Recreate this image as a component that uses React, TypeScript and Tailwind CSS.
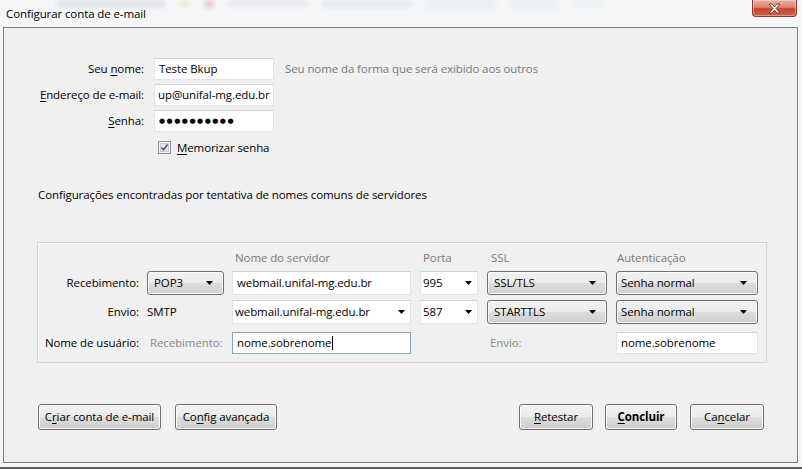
import React from 'react';

// Windows 7 style "Configurar conta de e-mail" dialog
const BTN_BG = 'bg-[linear-gradient(#f2f2f2,#ebebeb_50%,#dddddd_50%,#cfcfcf)]';

function U({ children }: { children: React.ReactNode }) {
  return <span className="underline underline-offset-[2px] decoration-[1px]">{children}</span>;
}

function Arrow() {
  return (
    <svg width="7" height="4" viewBox="0 0 7 4" className="shrink-0">
      <path d="M0 0h7L3.5 4z" fill="#000" />
    </svg>
  );
}

function SelectBtn({ value, className = '' }: { value: string; className?: string }) {
  return (
    <div
      className={`flex h-[24px] items-center justify-between rounded-[3px] border border-[#707070] ${BTN_BG} pl-[6px] pr-[10px] shadow-[inset_0_0_0_1px_#fbfbfb] ${className}`}
    >
      <span>{value}</span>
      <Arrow />
    </div>
  );
}

function Combo({ value, className = '' }: { value: string; className?: string }) {
  return (
    <div
      className={`flex h-[24px] items-center justify-between border border-[#e2e3ea] border-t-[#d0d3d9] bg-white pl-[2px] pr-[5px] ${className}`}
    >
      <span>{value}</span>
      <Arrow />
    </div>
  );
}

function TextBox({ children, className = '' }: { children: React.ReactNode; className?: string }) {
  return (
    <div
      className={`flex h-[22px] items-center border border-[#e2e3ea] border-t-[#d0d3d9] bg-white pl-[4px] ${className}`}
    >
      {children}
    </div>
  );
}

function Button({ children, className = '' }: { children: React.ReactNode; className?: string }) {
  return (
    <div
      className={`flex h-[26px] items-center justify-center rounded-[3px] border border-[#707070] ${BTN_BG} shadow-[inset_0_0_0_1px_#fbfbfb] ${className}`}
    >
      {children}
    </div>
  );
}

export default function App() {
  return (
    <div className="relative h-[469px] w-[802px] overflow-hidden bg-[#f4f6f8] font-['Open_Sans',sans-serif] text-[11.5px] tracking-[-0.1px] text-black">
      {/* title bar */}
      <div className="relative h-[27px]">
        <div className="absolute left-0 top-0 flex h-[10px] w-full items-start gap-[14px] pl-[56px] opacity-40 blur-[2px]">
          <div className="h-[8px] w-[110px] rounded bg-[#c9cdd3]" />
          <div className="h-[7px] w-[10px] rounded-full bg-[#e8e07a]" />
          <div className="h-[8px] w-[10px] rounded bg-[#d98a86]" />
          <div className="h-[7px] w-[80px] rounded bg-[#cfd3d8]" />
          <div className="h-[8px] w-[90px] rounded bg-[#d4d8de]" />
          <div className="h-[10px] w-[70px] rounded bg-[#dfe6f0]" />
          <div className="h-[9px] w-[50px] rounded bg-[#e3e6ea]" />
          <div className="h-[8px] w-[30px] rounded bg-[#e6e8eb]" />
        </div>
        <div className="relative pl-[6px] pt-[6px] leading-[16px]">Configurar conta de e-mail</div>
        <div className="absolute right-[5px] top-0 flex h-[17px] w-[45px] items-center justify-center rounded-b-[4px] border border-t-0 border-[#8a3a2c] bg-[linear-gradient(#eab1a3,#dc8470_45%,#c9442c_55%,#d4634a)] shadow-[inset_0_0_0_1px_rgba(255,255,255,0.35)]">
          <svg width="13" height="11" viewBox="0 0 13 11">
            <path
              d="M1 1h3l2.5 3 2.5-3h3L8 5.5 12 10H9L6.5 7 4 10H1l4-4.5z"
              fill="#fff"
              stroke="#4a2a26"
              strokeWidth="0.8"
              strokeLinejoin="round"
            />
          </svg>
        </div>
      </div>

      {/* dialog panel */}
      <div className="ml-[3px] flex h-[436px] w-[795px] flex-col border border-[#7d7d7d] bg-[#f0f0f0]">
        <div className="grid grid-cols-[140px_120px_1fr] gap-x-[10px] gap-y-[4px] pt-[30px] leading-[22px]">
          <div className="text-right">
            Seu <U>n</U>ome:
          </div>
          <TextBox>Teste Bkup</TextBox>
          <div className="pl-[1px] text-[#7a7a7a]">Seu nome da forma que será exibido aos outros</div>

          <div className="text-right">
            <U>E</U>ndereço de e-mail:
          </div>
          <TextBox className="overflow-hidden whitespace-nowrap !pl-[3px]">up@unifal-mg.edu.br</TextBox>
          <div />

          <div className="text-right">
            <U>S</U>enha:
          </div>
          <TextBox>
            <span className="font-['DejaVu_Sans',sans-serif] text-[7px] tracking-[1.5px]">●●●●●●●●●●</span>
          </TextBox>
          <div />
        </div>

        <div className="ml-[154px] mt-[9px] flex h-[13px] items-center gap-[6px] leading-[16px]">
          <svg width="13" height="13" viewBox="0 0 13 13">
            <rect x="0.5" y="0.5" width="12" height="12" fill="#f4f4f4" stroke="#8e8f8f" />
            <rect x="2.5" y="2.5" width="8" height="8" fill="#e3e5ea" stroke="#c6cad1" />
            <path d="M3.5 6.5l2 2.2L9.6 3.4" fill="none" stroke="#4c5b86" strokeWidth="1.6" />
          </svg>
          <span>
            <U>M</U>emorizar senha
          </span>
        </div>

        <div className="ml-[34px] mt-[33px] leading-[16px]">
          Configurações encontradas por tentativa de nomes comuns de servidores
        </div>

        {/* server settings box */}
        <div className="ml-[33px] mt-[39px] w-[730px] border border-[#d5d5d5] px-0 pb-[8px] pt-[7px] shadow-[inset_1px_1px_0_#fafafa]">
          <div className="grid grid-cols-[109px_85px_188px_67px_129px_142px] items-center">
            <div className="h-[16px]" />
            <div />
            <div className="pl-[3px] leading-[16px] text-[#7a7a7a]">Nome do servidor</div>
            <div className="pl-[3px] leading-[16px] text-[#7a7a7a]">Porta</div>
            <div className="pl-[4px] leading-[16px] text-[#7a7a7a]">SSL</div>
            <div className="pl-[1px] leading-[16px] text-[#7a7a7a]">Autenticação</div>

            <div className="mt-[5px] pr-[8px] text-right">Recebimento:</div>
            <SelectBtn value="POP3" className="mt-[5px] w-[77px]" />
            <TextBox className="mt-[5px] h-[24px] w-[179px] !pl-[4px]">webmail.unifal-mg.edu.br</TextBox>
            <Combo value="995" className="mt-[5px] w-[58px]" />
            <SelectBtn value="SSL/TLS" className="mt-[5px] w-[120px]" />
            <SelectBtn value="Senha normal" className="mt-[5px] w-[142px] !pl-[4px]" />

            <div className="mt-[5px] pr-[8px] text-right">Envio:</div>
            <div className="mt-[5px]">SMTP</div>
            <Combo value="webmail.unifal-mg.edu.br" className="mt-[5px] w-[179px]" />
            <Combo value="587" className="mt-[5px] w-[58px]" />
            <SelectBtn value="STARTTLS" className="mt-[5px] w-[120px]" />
            <SelectBtn value="Senha normal" className="mt-[5px] w-[142px] !pl-[4px]" />

            <div className="mt-[8px] pr-[8px] text-right">Nome de usuário:</div>
            <div className="mt-[8px] pl-[3px] text-[#8a8a8a]">Recebimento:</div>
            <TextBox className="mt-[8px] w-[179px] !border-[#8ea6c2]">
              <span>nome.sobrenome</span>
              <span className="ml-[1px] h-[14px] w-[1px] bg-black" />
            </TextBox>
            <div className="mt-[8px]" />
            <div className="mt-[8px] pl-[3px] text-[#8a8a8a]">Envio:</div>
            <TextBox className="mt-[8px] w-[142px]">nome.sobrenome</TextBox>
          </div>
        </div>

        {/* bottom buttons */}
        <div className="ml-[34px] mr-[33px] mt-[41px] flex items-center">
          <Button className="w-[123px]">
            C<U>r</U>iar conta de e-mail
          </Button>
          <Button className="ml-[14px] w-[102px]">
            Co<U>n</U>fig avançada
          </Button>
          <Button className="ml-auto w-[74px]">
            <U>R</U>etestar
          </Button>
          <Button className="ml-[12px] w-[72px] font-bold">
            <U>C</U>oncluir
          </Button>
          <Button className="ml-[13px] w-[74px]">
            Ca<U>n</U>celar
          </Button>
        </div>
      </div>

      <div className="h-[4px]" />
      <div className="h-[2px] bg-[#5b5b5b]" />
    </div>
  );
}
